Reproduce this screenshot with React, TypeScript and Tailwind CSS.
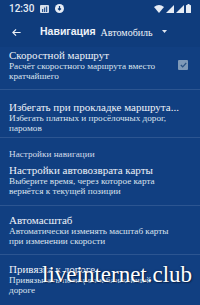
import React from 'react';

const serif = { fontFamily: '"Liberation Serif", "DejaVu Serif", serif' };

const StatusBar: React.FC = () => (
  <div className="h-[17px] flex items-center justify-between px-[9px] text-[#e6ecf5]">
    <div className="flex items-center gap-[6px]">
      <span className="text-[10px] font-medium" style={{ fontFamily: 'Roboto, sans-serif' }}>12:30</span>
      <svg width="9" height="8" viewBox="0 0 9 8">
        <rect x="0" y="0" width="9" height="8" rx="1" fill="#d6deea" />
        <rect x="2" y="4" width="1.2" height="3" fill="#2a5591" />
        <rect x="4" y="2.5" width="1.2" height="4.5" fill="#2a5591" />
        <rect x="6" y="1.5" width="1.2" height="5.5" fill="#2a5591" />
      </svg>
      <svg width="9" height="9" viewBox="0 0 9 9">
        <circle cx="4.5" cy="4.5" r="4.5" fill="#e6ecf5" />
        <path d="M4.5 2 v3.5 M3 4.5 l1.5 1.5 l1.5 -1.5" stroke="#0f3b77" strokeWidth="1.2" fill="none" />
      </svg>
    </div>
    <div className="flex items-center gap-[2px]">
      <svg width="10" height="8" viewBox="0 0 10 8">
        <path d="M0 2 Q5 -2 10 2 L5 8 Z" fill="#e6ecf5" />
      </svg>
      <svg width="8" height="8" viewBox="0 0 8 8">
        <path d="M8 0 L8 8 L0 8 Z" fill="#e6ecf5" />
      </svg>
      <svg width="8" height="8" viewBox="0 0 8 8">
        <path d="M8 0 L8 8 L0 8 Z" fill="#e6ecf5" />
      </svg>
      <svg width="5" height="9" viewBox="0 0 5 9">
        <rect x="1.5" y="0" width="2" height="1" fill="#e6ecf5" />
        <rect x="0" y="1" width="5" height="8" rx="0.5" fill="#e6ecf5" />
      </svg>
    </div>
  </div>
);

const Toolbar: React.FC = () => (
  <div className="h-[30px] flex items-center text-[#eef2f8]">
    <div className="w-[40px] flex items-center pl-[11px]">
      <svg width="11" height="11" viewBox="0 0 24 24" fill="none" stroke="#eef2f8" strokeWidth="2.4">
        <path d="M21 12H4M11 5l-7 7 7 7" />
      </svg>
    </div>
    <span className="text-[10.5px] font-bold" style={{ fontFamily: '"Liberation Sans", Arial, sans-serif' }}>Навигация</span>
    <span className="text-[10px] ml-[5px]" style={serif}>Автомобиль</span>
    <svg width="5" height="4" viewBox="0 0 5 4" className="ml-[9px]">
      <path d="M0 0 H5 L2.5 3 Z" fill="#dfe6f0" />
    </svg>
  </div>
);

type ItemProps = { title: string; sub: string[]; check?: boolean; className?: string };

const Item: React.FC<ItemProps> = ({ title, sub, check, className = '' }) => (
  <div className={`flex items-center pl-[9px] pr-[12px] ${className}`} style={serif}>
    <div className="flex-1">
      <div className="text-[11px] leading-[12px] text-[#eef2f8]">{title}</div>
      {sub.map((s, i) => (
        <div key={i} className="text-[9.2px] leading-[10px] text-[#dbe3ee]">{s}</div>
      ))}
    </div>
    {check && (
      <div className="w-[10px] h-[10px] rounded-[1px] bg-[#7f99b7] flex items-center justify-center">
        <svg width="7" height="6" viewBox="0 0 7 6">
          <path d="M0.8 3 L2.7 4.8 L6.2 1" stroke="#2a5282" strokeWidth="1.2" fill="none" />
        </svg>
      </div>
    )}
  </div>
);

const App: React.FC = () => {
  return (
    <div className="relative w-[200px] h-[305px] overflow-hidden bg-[#113f81]">
      <div className="bg-[#0f3c7c]">
        <StatusBar />
        <Toolbar />
      </div>

      <Item className="pt-[2px] pb-[8px]" title="Скоростной маршрут" sub={['Расчёт скоростного маршрута вместо', 'кратчайшего']} check />
      <Item className="border-t border-[#2c5591] pt-[11px] pb-[4px]" title="Избегать при прокладке маршрута..." sub={['Избегать платных и просёлочных дорог,', 'паромов']} />
      <div className="border-t border-[#2c5591] pl-[9px] pt-[11px] pb-[5px] text-[9.2px] leading-[10px] text-[#d4dcea]" style={serif}>
        Настройки навигации
      </div>
      <Item className="pb-[9px]" title="Настройки автовозврата карты" sub={['Выберите время, через которое карта', 'вернётся к текущей позиции']} />
      <Item className="border-t border-[#2c5591] pt-[8px] pb-[8px]" title="Автомасштаб" sub={['Автоматически изменять масштаб карты', 'при изменении скорости']} />
      <Item className="border-t border-[#2c5591] pt-[8px] pb-[8px]" title="Привязка к дороге" sub={['Привязывать позицию к ближайшей', 'дороге']} />

      <div
        className="absolute left-[42px] top-[263px] text-[23px] text-white leading-none"
        style={{ ...serif, textShadow: '0 0 2px #0a2550, 1px 1px 1px #0a2550' }}
      >
        liveinternet.club
      </div>
    </div>
  );
};

export default App;
